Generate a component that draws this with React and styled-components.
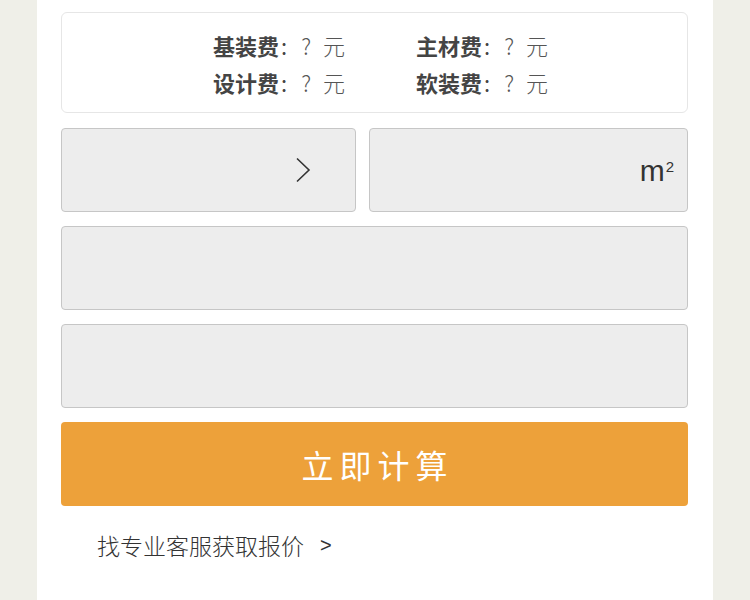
import React from 'react';
import styled, { createGlobalStyle } from 'styled-components';

const GlobalStyle = createGlobalStyle`
  html, body {
    margin: 0;
    padding: 0;
    background: #efefe8;
    font-family: "Noto Sans CJK SC", "Liberation Sans", sans-serif;
  }
`;

const fees = [
  { label: '基装费', value: '?', unit: '元' },
  { label: '主材费', value: '?', unit: '元' },
  { label: '设计费', value: '?', unit: '元' },
  { label: '软装费', value: '?', unit: '元' },
];

function Chevron() {
  return (
    <svg width="16" height="26" viewBox="0 0 16 26" fill="none">
      <path d="M2 1.5 L14 13 L2 24.5" stroke="#333" strokeWidth="1.6" />
    </svg>
  );
}

export default function App() {
  return (
    <>
      <GlobalStyle />
      <Card>
        <Summary>
          {fees.map((f) => (
            <FeeItem key={f.label}>
              <FeeLabel>{f.label}</FeeLabel>
              <Colon>:</Colon>
              <FeeValue>{f.value}</FeeValue>
              <FeeValue>{f.unit}</FeeValue>
            </FeeItem>
          ))}
        </Summary>

        <Row>
          <Field $width="295px">
            <Chevron />
          </Field>
          <Field $grow>
            <Unit>m<sup>2</sup></Unit>
          </Field>
        </Row>
        <Field />
        <Field />

        <CalcButton type="button">立即计算</CalcButton>

        <ServiceLink>找专业客服获取报价<Arrow>&gt;</Arrow></ServiceLink>
      </Card>
    </>
  );
}

const Card = styled.div`
  margin: 0 37px;
  min-height: 600px;
  background: #fff;
  padding: 12px 25px 0 24px;
  box-sizing: border-box;
  display: flex;
  flex-direction: column;
  gap: 14px;
`;

const Summary = styled.div`
  height: 101px;
  box-sizing: border-box;
  border: 1px solid #e6e6e6;
  border-radius: 6px;
  display: grid;
  grid-template-columns: 203px auto;
  align-content: center;
  padding: 2px 0 0 151px;
  row-gap: 2px;
  margin-bottom: 1px;
`;

const FeeItem = styled.div`
  display: flex;
  align-items: center;
  height: 35px;
  font-size: 22px;
`;

const FeeLabel = styled.span`
  font-weight: 700;
  color: #444;
`;

const Colon = styled.span`
  font-weight: 400;
  color: #444;
  margin: 0 14px 0 2px;
`;

const FeeValue = styled.span`
  font-weight: 300;
  color: #555;
  margin-right: 12px;
`;

const Row = styled.div`
  display: flex;
  gap: 13px;
`;

const Field = styled.div`
  height: 84px;
  box-sizing: border-box;
  background: #ededed;
  border: 1px solid #c6c6c6;
  border-radius: 4px;
  display: flex;
  align-items: center;
  justify-content: flex-end;
  ${(p) => p.$width && `width: ${p.$width}; flex-shrink: 0; padding-right: 44px;`}
  ${(p) => p.$grow && 'flex: 1; padding-right: 13px;'}
`;

const Unit = styled.span`
  font-family: "Liberation Sans", Arial, sans-serif;
  font-size: 30px;
  color: #333;
  margin-top: 2px;

  sup {
    font-size: 15px;
    vertical-align: 9px;
    margin-left: 1px;
  }
`;

const CalcButton = styled.button`
  height: 84px;
  border: none;
  border-radius: 4px;
  background: #eda13a;
  color: #fff;
  font-family: "Noto Sans CJK SC", sans-serif;
  font-size: 32px;
  letter-spacing: 6px;
  text-indent: 6px;
  padding: 0;
`;

const ServiceLink = styled.div`
  margin-top: 8px;
  padding-left: 36px;
  font-size: 23px;
  font-weight: 300;
  color: #333;
  display: flex;
  align-items: center;
`;

const Arrow = styled.span`
  margin-left: 16px;
  font-family: "Liberation Sans", sans-serif;
  font-size: 20px;
`;
